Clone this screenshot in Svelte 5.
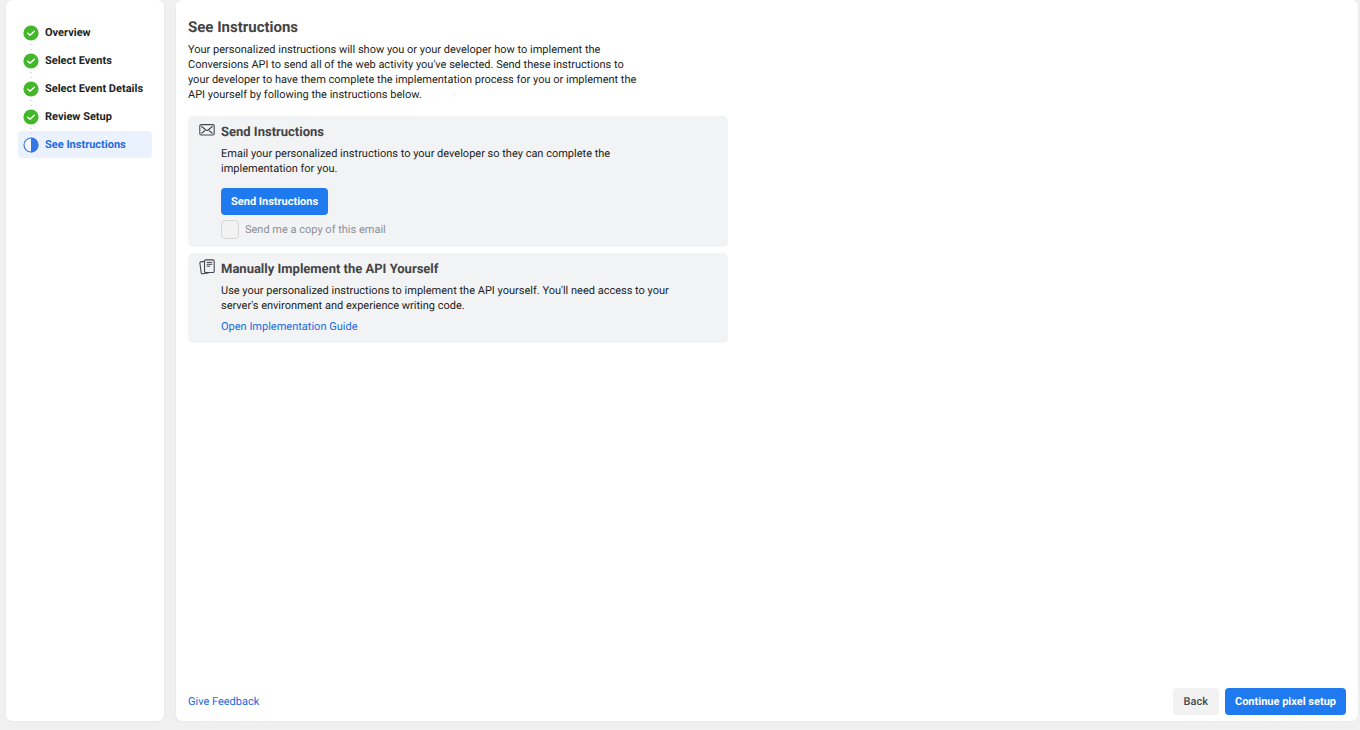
<script>
  const steps = [
    { label: 'Overview', done: true },
    { label: 'Select Events', done: true },
    { label: 'Select Event Details', done: true },
    { label: 'Review Setup', done: true },
    { label: 'See Instructions', done: false },
  ];
  let sendCopy = $state(false);
</script>

<div class="page">
  <nav class="panel sidebar" aria-label="Setup steps">
    <ol>
      {#each steps as step}
        <li class:current={!step.done} aria-current={step.done ? undefined : 'step'}>
          <svg class="status" viewBox="0 0 16 16" aria-hidden="true">
            {#if step.done}
              <circle cx="8" cy="8" r="7.6" fill="#42b72a" />
              <path d="M4.7 8.2 7 10.1 11.4 6.3" fill="none" stroke="#fff" stroke-width="1.4" stroke-linecap="round" stroke-linejoin="round" />
            {:else}
              <circle cx="8" cy="8" r="7" fill="#f4f8ff" stroke="#3578e5" stroke-width="1.1" />
              <path d="M8 .6a7.4 7.4 0 0 1 0 14.8z" fill="#3578e5" />
            {/if}
          </svg>
          <span>{step.label}</span>
        </li>
      {/each}
    </ol>
  </nav>

  <main class="panel content">
    <h1>See Instructions</h1>
    <p class="intro">
      Your personalized instructions will show you or your developer how to implement the
      Conversions API to send all of the web activity you've selected. Send these instructions to
      your developer to have them complete the implementation process for you or implement the
      API yourself by following the instructions below.
    </p>

    <section class="card">
      <svg class="icon" viewBox="0 0 16 16" fill="none" stroke="#444950" stroke-width="1.1" stroke-linejoin="round" stroke-linecap="round" aria-hidden="true">
        <rect x=".8" y="2.6" width="14.4" height="10.4" rx="1.4" />
        <path d="M2.7 4.5 6.9 8Q8 8.9 9.1 8l4.2-3.5M2.7 11.2 5.7 8.8M13.3 11.2 10.3 8.8" />
      </svg>
      <div class="body">
        <h2>Send Instructions</h2>
        <p>Email your personalized instructions to your developer so they can complete the implementation for you.</p>
        <button class="primary send" type="button">Send Instructions</button>
        <label class="copy">
          <input type="checkbox" bind:checked={sendCopy} />
          <span>Send me a copy of this email</span>
        </label>
      </div>
    </section>

    <section class="card">
      <svg class="icon" viewBox="0 0 16 16" fill="none" stroke="#444950" stroke-width="1.1" stroke-linejoin="round" stroke-linecap="round" aria-hidden="true">
        <rect x="5.5" y=".9" width="9.7" height="12.6" rx="1.3" />
        <path d="M5.3 2.4 1.8 2.9Q.7 3.1.9 4.2L2.2 13.8Q2.4 15 3.5 14.8L9.3 13.9" />
        <path d="M8 3.4h4.9M8 5.3h4.9M8 7.2h2.7" stroke-width="1" />
      </svg>
      <div class="body">
        <h2>Manually Implement the API Yourself</h2>
        <p>Use your personalized instructions to implement the API yourself. You'll need access to your server's environment and experience writing code.</p>
        <a class="guide" href="#guide">Open Implementation Guide</a>
      </div>
    </section>

    <footer>
      <a href="#feedback">Give Feedback</a>
      <div class="actions">
        <button class="secondary" type="button">Back</button>
        <button class="primary" type="button">Continue pixel setup</button>
      </div>
    </footer>
  </main>
</div>

<style>
  :global(body) {
    background: #f0f0f0;
  }
  .page {
    box-sizing: border-box;
    min-height: 100vh;
    padding: 0 2px 9px 6px;
    display: flex;
    gap: 12px;
    font: 11px/15px Roboto, sans-serif;
    text-rendering: geometricPrecision;
    color: #1c1e21;
  }
  .panel {
    box-sizing: border-box;
    background: #fff;
    border-radius: 6px;
    box-shadow: 0 0 2px rgba(0, 0, 0, 0.08);
  }
  .sidebar {
    flex: 0 0 158px;
    padding: 19px 12px;
  }
  ol {
    list-style: none;
    margin: 0;
    padding: 0;
    display: grid;
    gap: 1px;
  }
  li {
    position: relative;
    display: flex;
    align-items: center;
    gap: 6px;
    height: 27px;
    padding-left: 5px;
    border-radius: 4px;
    font-weight: 700;
  }
  li:not(:last-child)::after {
    content: '';
    position: absolute;
    z-index: 1;
    left: 12px;
    top: 23px;
    width: 2px;
    height: 9px;
    background: radial-gradient(circle, #dadde1 1px, transparent 1px) 0 0 / 2px 5px;
  }
  .current {
    background: #ebf2fe;
    color: #1b6be0;
  }
  .status {
    width: 16px;
    height: 16px;
    flex: none;
  }
  .content {
    flex: 1;
    min-width: 0;
    display: flex;
    flex-direction: column;
    padding: 17px 12px 6px;
  }
  h1,
  h2,
  p {
    margin: 0;
  }
  h1,
  h2 {
    color: #444444;
    font-weight: 700;
  }
  h1 {
    font-size: 15px;
    line-height: 20px;
  }
  .intro {
    max-width: 450px;
    margin: 5px 0 14px;
  }
  .card {
    box-sizing: border-box;
    width: 100%;
    max-width: 540px;
    margin-bottom: 6px;
    padding: 6px 12px 8px 11px;
    display: flex;
    gap: 6px;
    background: #f2f3f5;
    border-radius: 5px;
  }
  .icon {
    width: 16px;
    height: 16px;
    flex: none;
  }
  h2 {
    font-size: 13px;
    line-height: 22px;
  }
  .body {
    display: flex;
    flex-direction: column;
    align-items: flex-start;
  }
  .body p {
    max-width: 450px;
    margin-top: 2px;
  }
  a {
    color: #1b6be0;
    text-decoration: none;
  }
  .guide {
    margin: 6px 0 1px;
  }
  button {
    height: 27px;
    padding: 0 10px;
    border: 0;
    border-radius: 4px;
    font: 700 11px/15px Roboto, sans-serif;
    text-rendering: inherit;
    cursor: pointer;
  }
  .primary {
    background: #1f7af0;
    color: #fff;
  }
  .secondary {
    padding: 0 11px;
    background: #f2f2f2;
    color: #444950;
    font-weight: 500;
  }
  .send {
    margin-top: 12px;
  }
  .copy {
    display: flex;
    align-items: center;
    gap: 6px;
    margin-top: 5px;
    color: #8d9095;
  }
  input {
    appearance: none;
    box-sizing: border-box;
    width: 18px;
    height: 19px;
    margin: 0;
    border: 1px solid #d5d6d8;
    border-radius: 4px;
    background: #f2f2f2;
  }
  input:checked {
    background: #1f7af0;
  }
  footer {
    margin-top: auto;
    display: flex;
    align-items: center;
    justify-content: space-between;
  }
  .actions {
    display: flex;
    gap: 6px;
  }
</style>
